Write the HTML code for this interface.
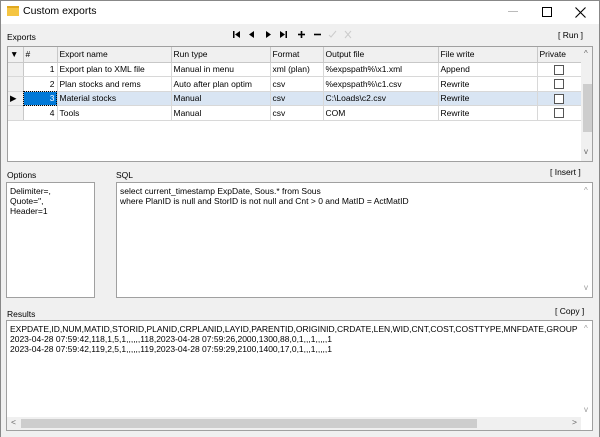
<!DOCTYPE html>
<html><head><style>
*{box-sizing:border-box;margin:0;padding:0}
body{width:600px;height:437px;overflow:hidden;background:#f0f0f0;font-family:"Liberation Sans",sans-serif;font-size:8.5px;color:#000;position:relative}
.abs{position:absolute}
.title{left:0;top:0;width:600px;height:24px;background:#fff;border:1px solid #888;border-bottom:none}
.box{background:#fff;border:1px solid #a0a0a0}
table{border-collapse:collapse;table-layout:fixed}
td{border-right:1px solid #d8d8d8;border-bottom:1px solid #d8d8d8;height:14.5px;padding:0 2px;white-space:nowrap;overflow:hidden}
tr.h td{background:#f0f0f0;border-right:1px solid #c8c8c8;border-bottom:1px solid #c8c8c8;height:15px}
td.ind{background:#f0f0f0;border-right:1px solid #c8c8c8}
.cb{display:inline-block;width:10px;height:10px;border:1px solid #555;background:#fff;vertical-align:middle}
.sel td{background:#d9e5f3}
.ar{color:#999;font-size:8px}
</style></head><body>
<div class="abs title"></div>
<div class="abs" style="left:0;top:0;width:1px;height:437px;background:#888"></div>
<div class="abs" style="right:0;top:0;width:1px;height:437px;background:#888"></div>
<div class="abs" style="left:7px;top:6px;width:12px;height:10px;background:#f5c542;border-top:2px solid #e0a820"></div>
<div class="abs" style="left:23px;top:5px;font-size:10.5px">Custom exports</div>
<div class="abs" style="left:508px;top:11px;width:10px;height:1px;background:#bbb"></div>
<div class="abs" style="left:542px;top:7px;width:10px;height:10px;border:1px solid #000"></div>
<svg class="abs" style="left:575px;top:7px" width="11" height="11"><path d="M0.5 0.5L10.5 10.5M10.5 0.5L0.5 10.5" stroke="#000" stroke-width="1.1"/></svg>

<div class="abs" style="left:7px;top:32px">Exports</div>
<svg class="abs" style="left:232px;top:30px" width="125" height="10">
<g fill="#000"><rect x="1" y="1" width="1.5" height="7"/><path d="M8 1L3 4.5L8 8Z"/>
<path d="M22 1L17 4.5L22 8Z"/><path d="M34 1L39 4.5L34 8Z"/>
<path d="M48 1L53 4.5L48 8Z"/><rect x="53.5" y="1" width="1.5" height="7"/>
<rect x="66" y="3.7" width="7" height="1.6"/><rect x="68.7" y="1" width="1.6" height="7"/>
<rect x="82" y="3.7" width="7" height="1.6"/></g>
<path d="M97 5L99 7L104 1" stroke="#ccc" fill="none"/><path d="M113 1L119 8M119 1L113 8" stroke="#ccc"/>
</svg>
<div class="abs" style="left:558px;top:30px">[ Run ]</div>

<div class="abs box" style="left:7px;top:46px;width:586px;height:116px;overflow:hidden">
<table style="width:573px">
<colgroup><col style="width:15px"><col style="width:34px"><col style="width:114px"><col style="width:99px"><col style="width:53px"><col style="width:115px"><col style="width:99px"><col style="width:44px"></colgroup>
<tr class="h"><td>▼</td><td>#</td><td>Export name</td><td>Run type</td><td>Format</td><td>Output file</td><td>File write</td><td>Private</td></tr>
<tr><td class="ind"></td><td style="text-align:right">1</td><td>Export plan to XML file</td><td>Manual in menu</td><td>xml (plan)</td><td>%expspath%\x1.xml</td><td>Append</td><td style="text-align:center"><span class="cb"></span></td></tr>
<tr><td class="ind"></td><td style="text-align:right">2</td><td>Plan stocks and rems</td><td>Auto after plan optim</td><td>csv</td><td>%expspath%\c1.csv</td><td>Rewrite</td><td style="text-align:center"><span class="cb"></span></td></tr>
<tr class="sel"><td class="ind" style="background:#f0f0f0">▶</td><td style="text-align:right;background:#0078d7;color:#fff;outline:1px dotted #000;outline-offset:-1px">3</td><td>Material stocks</td><td>Manual</td><td>csv</td><td>C:\Loads\c2.csv</td><td>Rewrite</td><td style="text-align:center"><span class="cb"></span></td></tr>
<tr><td class="ind"></td><td style="text-align:right">4</td><td>Tools</td><td>Manual</td><td>csv</td><td>COM</td><td>Rewrite</td><td style="text-align:center"><span class="cb"></span></td></tr>
</table>
<div class="abs" style="left:573px;top:0;width:12px;height:114px;background:#f0f0f0"></div>
<div class="abs" style="left:575px;top:37px;width:9px;height:48px;background:#cdcdcd"></div>
<div class="abs ar" style="left:576px;top:2px;color:#666">^</div>
<div class="abs ar" style="left:576px;top:100px;color:#666">v</div>
</div>

<div class="abs" style="left:7px;top:170px">Options</div>
<div class="abs" style="left:116px;top:170px">SQL</div>
<div class="abs" style="left:550px;top:167px">[ Insert ]</div>
<div class="abs box" style="left:6px;top:182px;width:89px;height:116px;padding:3px;line-height:10px">Delimiter=,<br>Quote=",<br>Header=1</div>
<div class="abs box" style="left:116px;top:182px;width:477px;height:116px;padding:3px;line-height:10px">select current_timestamp ExpDate, Sous.* from Sous<br>where PlanID is null and StorID is not null and Cnt &gt; 0 and MatID = ActMatID
<div class="abs ar" style="left:467px;top:3px">^</div><div class="abs ar" style="left:467px;top:100px">v</div></div>

<div class="abs" style="left:7px;top:309px">Results</div>
<div class="abs" style="left:555px;top:306px">[ Copy ]</div>
<div class="abs box" style="left:6px;top:320px;width:587px;height:111px;padding:3px;line-height:10px;overflow:hidden;white-space:nowrap"><div style="width:568px;overflow:hidden">EXPDATE,ID,NUM,MATID,STORID,PLANID,CRPLANID,LAYID,PARENTID,ORIGINID,CRDATE,LEN,WID,CNT,COST,COSTTYPE,MNFDATE,GROUPNUM,MARKED<br>2023-04-28 07:59:42,118,1,5,1,,,,,,118,2023-04-28 07:59:26,2000,1300,88,0,1,,,1,,,,,1<br>2023-04-28 07:59:42,119,2,5,1,,,,,,119,2023-04-28 07:59:29,2100,1400,17,0,1,,,1,,,,,1</div>
<div class="abs ar" style="left:577px;top:3px">^</div><div class="abs ar" style="left:577px;top:84px">v</div>
<div class="abs" style="left:0;top:96px;width:574px;height:13px;background:#f0f0f0"></div>
<div class="abs" style="left:14px;top:98px;width:456px;height:9px;background:#cdcdcd"></div>
<div class="abs" style="left:4px;top:96px;color:#666">&lt;</div>
<div class="abs" style="left:565px;top:96px;color:#666">&gt;</div>
</div>
</body></html>
